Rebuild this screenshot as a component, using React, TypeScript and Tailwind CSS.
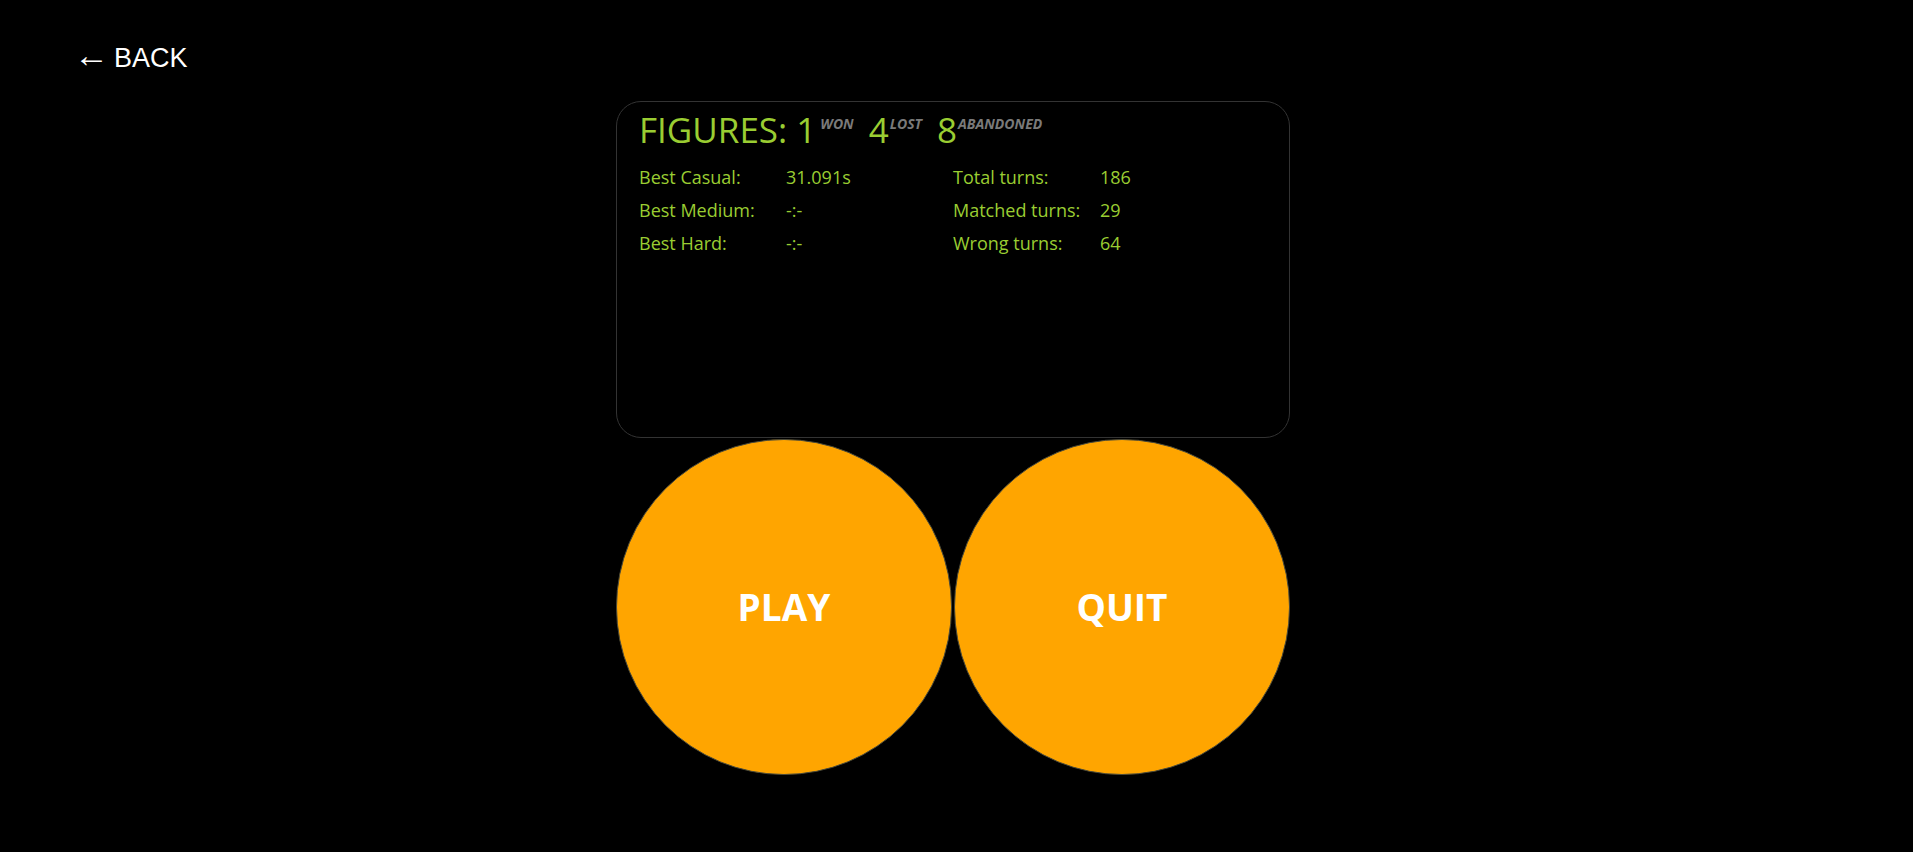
import React from 'react';

const stats = {
  won: 1,
  lost: 4,
  abandoned: 8,
  left: [
    { label: 'Best Casual:', value: '31.091s' },
    { label: 'Best Medium:', value: '-:-' },
    { label: 'Best Hard:', value: '-:-' },
  ],
  right: [
    { label: 'Total turns:', value: '186' },
    { label: 'Matched turns:', value: '29' },
    { label: 'Wrong turns:', value: '64' },
  ],
};

const Sup: React.FC<{ children: React.ReactNode; className?: string }> = ({ children, className }) => (
  <span className={`relative -top-[14px] text-[14px] leading-none font-bold italic text-[#7a7a7a] ${className ?? ''}`}>
    {children}
  </span>
);

const StatList: React.FC<{ rows: { label: string; value: string }[] }> = ({ rows }) => (
  <div className="w-1/2">
    {rows.map((row) => (
      <div key={row.label} className="flex leading-[33px]">
        <span className="w-[147px] shrink-0">{row.label}</span>
        <span>{row.value}</span>
      </div>
    ))}
  </div>
);

export default function App() {
  return (
    <div className="min-h-screen bg-black font-['Open_Sans',sans-serif]">
      <div className="pl-[79px] pt-[43px] font-['Liberation_Sans',Arial,sans-serif] text-[27px] leading-[30px] text-white">
        <a href="#">
          <span className="-ml-[5px] text-[35px] leading-[0]">←</span>
          <span className="ml-[5px]">BACK</span>
        </a>
      </div>
      <div className="mt-[28px] flex justify-center pr-[7px]">
        <div className="w-[674px]">
          <div className="h-[337px] rounded-[25px] border border-[#333] px-[22px] pt-[4px] text-[#9acd32]">
            <div className="text-[35px] leading-[48px]">
              FIGURES: {stats.won}
              <Sup className="ml-[4px]">WON</Sup>
              <span className="ml-[15px]">{stats.lost}</span>
              <Sup className="ml-[1px]">LOST</Sup>
              <span className="ml-[15px]">{stats.abandoned}</span>
              <Sup className="ml-[1px]">ABANDONED</Sup>
            </div>
            <div className="mt-[7px] flex text-[18px]">
              <StatList rows={stats.left} />
              <StatList rows={stats.right} />
            </div>
          </div>
          <div className="mt-[1px] flex gap-[2px]">
            <button className="flex h-[336px] w-[336px] items-center justify-center rounded-full border border-[#4a4a3a] bg-[#ffa500] text-[37px] font-bold text-white">
              PLAY
            </button>
            <button className="flex h-[336px] w-[336px] items-center justify-center rounded-full border border-[#4a4a3a] bg-[#ffa500] text-[37px] font-bold text-white">
              QUIT
            </button>
          </div>
        </div>
      </div>
    </div>
  );
}
